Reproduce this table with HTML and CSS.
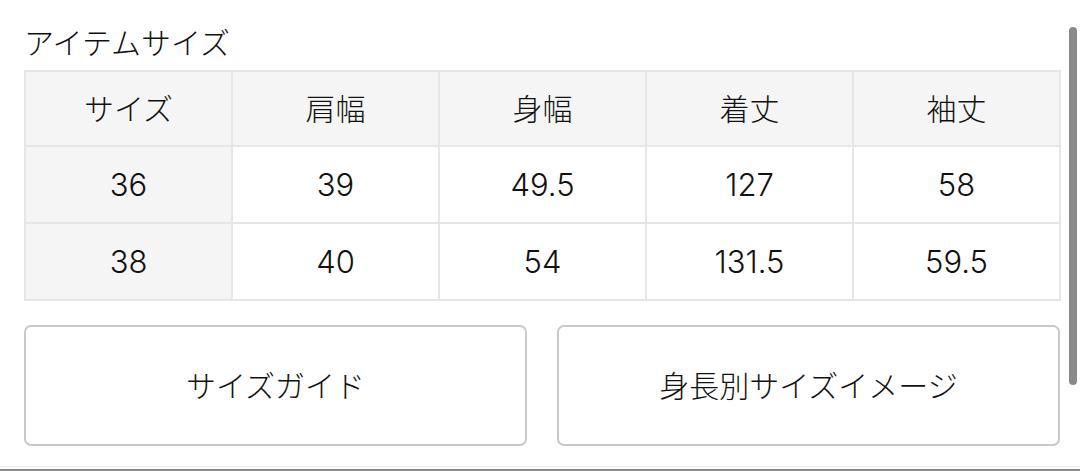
FILE: index.html
```html
<!DOCTYPE html>
<html lang="ja">
<head>
<meta charset="utf-8">
<link rel="stylesheet" href="styles.css">
</head>
<body>
<div class="page">
  <section class="content">
    <h2 class="title">アイテムサイズ</h2>
    <table class="size-table">
      <thead>
        <tr><th class="key">サイズ</th><th>肩幅</th><th>身幅</th><th>着丈</th><th>袖丈</th></tr>
      </thead>
      <tbody>
        <tr><td class="key">36</td><td>39</td><td>49.5</td><td>127</td><td>58</td></tr>
        <tr><td class="key">38</td><td>40</td><td>54</td><td>131.5</td><td>59.5</td></tr>
      </tbody>
    </table>
    <div class="buttons">
      <button class="btn">サイズガイド</button>
      <button class="btn">身長別サイズイメージ</button>
    </div>
  </section>
  <div class="scrollbar"></div>
  <div class="bottom-rule"></div>
</div>
</body>
</html>
```

FILE: styles.css
```css
html, body {
  margin: 0;
  padding: 0;
  background: #fff;
}
body {
  font-family: "Noto Sans CJK JP", "Noto Sans", sans-serif;
  color: #111;
}
.page {
  position: relative;
  width: 1080px;
  height: 471px;
  overflow: hidden;
  display: flex;
  flex-direction: column;
}
.content {
  padding: 20px 19px 0 24px;
  flex: 1;
}
.title {
  margin: 0 0 8px 0;
  font-size: 30px;
  font-weight: 300;
  line-height: 42px;
}
.size-table {
  width: 1037px;
  table-layout: fixed;
  border-collapse: collapse;
  border: 2px solid #e6e6e6;
}
.size-table th,
.size-table td {
  border: 2px solid #e6e6e6;
  text-align: center;
  font-weight: 300;
  padding: 0;
  line-height: 1;
}
.size-table thead th {
  background: #f5f5f5;
  height: 70px;
  padding-bottom: 3px;
  font-size: 30px;
}
.size-table tbody td {
  height: 75px;
  font-family: "Inter", "Liberation Sans", sans-serif;
  font-size: 31px;
  font-weight: 300;
  color: #111;
}
.size-table .key {
  background: #f5f5f5;
}
.buttons {
  margin-top: 24px;
  display: flex;
  gap: 30px;
  width: 1036px;
}
.btn {
  flex: 1;
  box-sizing: border-box;
  height: 121px;
  background: #fff;
  border: 2px solid #c9c9c9;
  border-radius: 7px;
  font-family: inherit;
  font-size: 30px;
  font-weight: 300;
  color: #111;
  padding: 0 0 4px 0;
}
.scrollbar {
  position: absolute;
  left: 1069px;
  top: 27px;
  width: 8px;
  height: 358px;
  border-radius: 4px;
  background: #8a8a8a;
}
.bottom-rule {
  flex: none;
  height: 4px;
  border-top: 1px solid #ececec;
  box-shadow: inset 0 -2px 0 #8a8a8a;
}
```
